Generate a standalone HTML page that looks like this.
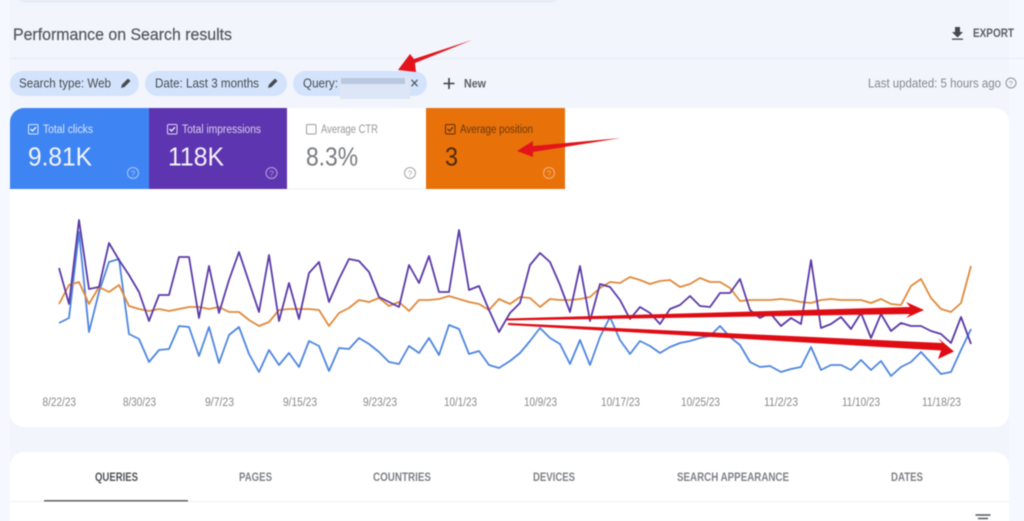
<!DOCTYPE html>
<html><head><meta charset="utf-8"><title>Performance on Search results</title>
<style>
html,body{margin:0;padding:0;width:1024px;height:521px;overflow:hidden;background:#f2f5fc}
svg{display:block;position:absolute;left:0;top:0;filter:blur(.5px)}
text{font-family:"Liberation Sans",sans-serif}
.ax{font-size:11.500px;fill:#85888c}
.tab{font-size:12px;fill:#7e8185;font-weight:bold}
.chip{font-size:12.500px;fill:#464b52}
</style></head><body>
<svg width="1024" height="521" viewBox="0 0 1024 521" xmlns="http://www.w3.org/2000/svg">
<rect width="1024" height="521" fill="#f2f5fc"/>
<rect width="10" height="521" fill="#f5f8fe"/>
<rect x="1009" width="15" height="521" fill="#f5f8fe"/>
<path d="M17 0H559L552 2.500H24Z" fill="#e6ecf7"/>

<text x="13" y="40" font-size="16.500" fill="#54585d" stroke="#54585d" stroke-width=".2" textLength="219" lengthAdjust="spacingAndGlyphs">Performance on Search results</text>
<path d="M955 27h5v5h3l-5.500 5.500L952 32h3z" fill="#45494e"/><rect x="952" y="38.500" width="11" height="1.300" fill="#45494e"/>
<text x="973" y="37" font-size="12" font-weight="bold" fill="#5b5f64" textLength="41" lengthAdjust="spacingAndGlyphs">EXPORT</text>
<rect x="10" y="58" width="1014" height="1" fill="#e6eaf3"/>

<rect x="10" y="71" width="129" height="25" rx="12.500" fill="#d3e3fb"/>
<rect x="145" y="71" width="142" height="25" rx="12.500" fill="#d3e3fb"/>
<rect x="293" y="71" width="134" height="25" rx="12.500" fill="#d3e3fb"/>
<text class="chip" x="19" y="87.500" textLength="92" lengthAdjust="spacingAndGlyphs">Search type: Web</text>
<text class="chip" x="155" y="87.500" textLength="104" lengthAdjust="spacingAndGlyphs">Date: Last 3 months</text>
<text class="chip" x="303" y="87.500" textLength="35" lengthAdjust="spacingAndGlyphs">Query:</text>
<path d="M121 88l1-3.500 6-6 2.500 2.500-6 6z" fill="#464b52"/>
<path d="M268 88l1-3.500 6-6 2.500 2.500-6 6z" fill="#464b52"/>
<rect x="340" y="77" width="70" height="22" fill="#dce6f7"/>
<rect x="341" y="78" width="64" height="6" fill="#b9c8de"/>
<path d="M411.500 79.800l6 6.400M417.500 79.800l-6 6.400" stroke="#50565c" stroke-width="1.200"/>
<path d="M449 78v11M443.500 83.500h11" stroke="#3c4045" stroke-width="1.600"/>
<text x="464" y="87.500" font-size="12" font-weight="bold" fill="#5b5f64" textLength="22" lengthAdjust="spacingAndGlyphs">New</text>
<text x="868" y="87.500" font-size="12.500" fill="#85898e" textLength="133" lengthAdjust="spacingAndGlyphs">Last updated: 5 hours ago</text>
<circle cx="1011" cy="83" r="5" fill="none" stroke="#8f9296"/>
<text x="1008.800" y="86" font-size="7" fill="#8f9296">?</text>

<path d="M24 108H995a14 14 0 0 1 14 14V413a14 14 0 0 1-14 14H24a14 14 0 0 1-14-14V122a14 14 0 0 1 14-14Z" fill="#fff"/>
<path d="M149 108H24a14 14 0 0 0-14 14V189H149Z" fill="#3f84f3"/>
<rect x="149" y="108" width="138" height="81" fill="#5e35b0"/>
<rect x="426" y="108" width="139" height="81" fill="#e8710a"/>
<rect x="287" y="188.500" width="139" height="1" fill="#eef0f3"/>

<rect x="28.500" y="124.500" width="9.500" height="9.500" rx="1.200" fill="none" stroke="#d5e4fb"/>
<path d="M30.500 129l2 2 3.500-3.800" fill="none" stroke="#fff" stroke-width="1.200"/>
<text x="43" y="133" font-size="11.500" fill="#d5e4fb" textLength="50" lengthAdjust="spacingAndGlyphs">Total clicks</text>
<text x="28" y="165.500" font-size="25.500" fill="#f2f6fe" textLength="64" lengthAdjust="spacingAndGlyphs">9.81K</text>
<circle cx="133" cy="173" r="5.500" fill="none" stroke="#a7c6f9"/><text x="130.800" y="176.300" font-size="8" fill="#a7c6f9">?</text>

<rect x="167.500" y="124.500" width="9.500" height="9.500" rx="1.200" fill="none" stroke="#ddd5ef"/>
<path d="M169.500 129l2 2 3.500-3.800" fill="none" stroke="#fff" stroke-width="1.200"/>
<text x="182" y="133" font-size="11.500" fill="#dad0ee" textLength="79" lengthAdjust="spacingAndGlyphs">Total impressions</text>
<text x="168" y="165.500" font-size="25.500" fill="#f5f2fb" textLength="56" lengthAdjust="spacingAndGlyphs">118K</text>
<circle cx="271.500" cy="173" r="5.500" fill="none" stroke="#b5a3dc"/><text x="269.300" y="176.300" font-size="8" fill="#b5a3dc">?</text>

<rect x="306.500" y="124.500" width="9.500" height="9.500" rx="1.200" fill="none" stroke="#9a9da1"/>
<text x="321" y="133" font-size="11.500" fill="#94979b" textLength="57" lengthAdjust="spacingAndGlyphs">Average CTR</text>
<text x="306" y="165.500" font-size="25.500" fill="#777a7e" textLength="52" lengthAdjust="spacingAndGlyphs">8.3%</text>
<circle cx="410" cy="173" r="5.500" fill="none" stroke="#a3a6a9"/><text x="407.800" y="176.300" font-size="8" fill="#a3a6a9">?</text>

<rect x="445.500" y="124.500" width="9.500" height="9.500" rx="1.200" fill="none" stroke="#5d3208"/>
<path d="M447.500 129l2 2 3.500-3.800" fill="none" stroke="#5d3208" stroke-width="1.200"/>
<text x="460" y="133" font-size="11.500" fill="#6a3a0b" textLength="73" lengthAdjust="spacingAndGlyphs">Average position</text>
<text x="445" y="165.500" font-size="25.500" fill="#4e2a08" textLength="13" lengthAdjust="spacingAndGlyphs">3</text>
<circle cx="549" cy="173" r="5.500" fill="none" stroke="#f3b27a"/><text x="546.800" y="176.300" font-size="8" fill="#f3b27a">?</text>

<polyline fill="none" stroke="#4f86e0" stroke-width="1.800" stroke-linejoin="round" points="59,323 69,318 79,232 89,332 99,292 109,262 119,259 129,334 139,339 149,362 159,350 169,349 179,326 189,327 199,356 209,327 219,363 229,335 239,327 249,354 259,372 269,350 279,365 289,353 299,367 309,341 319,346 329,371 339,348 349,349 359,338 369,344 379,352 389,362 399,364 409,346 419,353 429,338 439,355 449,325 459,329 469,354 479,351 489,365 499,368 510,361 520,353 530,341 540,328 550,338 560,344 570,364 580,340 590,365 600,337 610,317 620,340 630,354 640,341 650,346 660,353 670,347 680,343 690,341 700,338 710,336 720,326 730,337 740,345 750,362 760,367 770,366 781,372 791,369 801,367 811,347 821,370 831,365 841,365 851,370 861,360 871,370 881,361 891,376 901,367 911,362 921,352 931,363 941,374 951,372 961,350 971,329"/>
<polyline fill="none" stroke="#e08a3c" stroke-width="1.800" stroke-linejoin="round" points="59,304 69,285 79,282 89,304 99,287 109,292 119,285 129,306 139,309 149,311 159,309 169,311 179,309 189,307 199,307 209,309 219,307 229,312 239,312 249,320 259,326 269,322 279,310 289,309 299,309 309,309 319,310 329,326 339,313 349,308 359,300 369,302 379,298 389,306 399,302 409,311 419,300 429,300 439,299 449,296 459,299 469,302 479,304 489,310 499,299 510,304 520,297 530,298 540,307 550,299 560,300 570,300 580,299 590,297 600,288 610,282 620,283 630,277 640,280 650,284 660,281 670,280 680,287 690,284 700,278 710,282 720,282 730,288 740,301 750,300 760,300 770,300 781,299 791,300 801,302 811,303 821,300 831,299 841,300 851,300 861,300 871,303 881,299 891,304 901,305 911,286 921,279 931,298 941,309 951,312 961,303 971,266"/>
<polyline fill="none" stroke="#5b3aa8" stroke-width="1.800" stroke-linejoin="round" points="59,268 69,304 79,220 89,289 99,287 109,243 119,260 129,275 139,292 149,321 159,295 169,295 179,257 189,257 199,318 209,266 219,313 229,280 239,252 249,282 259,312 269,255 279,321 289,283 299,319 309,273 319,262 329,302 339,279 349,259 359,261 369,272 379,297 389,302 399,307 409,265 419,283 429,256 439,292 449,292 459,230 469,290 479,286 489,310 499,332 510,313 520,303 530,265 540,253 550,262 560,285 570,312 580,266 590,321 600,284 610,287 620,300 630,319 640,307 650,313 660,324 670,309 680,305 690,296 700,306 710,307 720,293 730,293 740,279 750,310 760,318 770,313 781,326 791,318 801,324 811,260 821,328 831,324 841,317 851,329 861,313 871,338 881,314 891,331 901,323 911,326 921,326 931,331 941,334 951,343 961,317 971,344"/>

<path d="M507 318.500L910 307L906 302L924 310L906 318L910 314L507 320.500Z" fill="#e00c14"/>
<path d="M508 323L942 343L938 338L954 351.500L938 359L941 350.500L508 325Z" fill="#e00c14"/>
<path d="M472 40L414 59L410 54L398 70L416 72L415 63Z" fill="#e3141b"/>
<path d="M621 138L533 146V141L517 151L533 157V152Z" fill="#e3141b"/>

<text class="ax" x="42.500" y="406" textLength="33.500" lengthAdjust="spacingAndGlyphs">8/22/23</text>
<text class="ax" x="123" y="406" textLength="33" lengthAdjust="spacingAndGlyphs">8/30/23</text>
<text class="ax" x="205" y="406" textLength="29" lengthAdjust="spacingAndGlyphs">9/7/23</text>
<text class="ax" x="283" y="406" textLength="34" lengthAdjust="spacingAndGlyphs">9/15/23</text>
<text class="ax" x="363" y="406" textLength="34" lengthAdjust="spacingAndGlyphs">9/23/23</text>
<text class="ax" x="444" y="406" textLength="33" lengthAdjust="spacingAndGlyphs">10/1/23</text>
<text class="ax" x="524" y="406" textLength="33" lengthAdjust="spacingAndGlyphs">10/9/23</text>
<text class="ax" x="601" y="406" textLength="39" lengthAdjust="spacingAndGlyphs">10/17/23</text>
<text class="ax" x="681" y="406" textLength="39" lengthAdjust="spacingAndGlyphs">10/25/23</text>
<text class="ax" x="764" y="406" textLength="34" lengthAdjust="spacingAndGlyphs">11/2/23</text>
<text class="ax" x="842" y="406" textLength="38" lengthAdjust="spacingAndGlyphs">11/10/23</text>
<text class="ax" x="922" y="406" textLength="39" lengthAdjust="spacingAndGlyphs">11/18/23</text>

<path d="M24 452H995a14 14 0 0 1 14 14V521H10V466a14 14 0 0 1 14-14Z" fill="#fff"/>
<text class="tab" x="95" y="481" style="fill:#4f5256" textLength="43" lengthAdjust="spacingAndGlyphs">QUERIES</text>
<text class="tab" x="239" y="481" textLength="33" lengthAdjust="spacingAndGlyphs">PAGES</text>
<text class="tab" x="373" y="481" textLength="58" lengthAdjust="spacingAndGlyphs">COUNTRIES</text>
<text class="tab" x="533" y="481" textLength="42" lengthAdjust="spacingAndGlyphs">DEVICES</text>
<text class="tab" x="677" y="481" textLength="112" lengthAdjust="spacingAndGlyphs">SEARCH APPEARANCE</text>
<text class="tab" x="891" y="481" textLength="32" lengthAdjust="spacingAndGlyphs">DATES</text>
<rect x="10" y="501" width="999" height="1" fill="#eef0f2"/>
<rect x="44" y="500" width="144" height="1.500" fill="#5f6368"/>
<path d="M975.500 515h15M978 518.500h10M980.500 522h5" stroke="#55595e" stroke-width="1.500"/>
</svg>
</body></html>
